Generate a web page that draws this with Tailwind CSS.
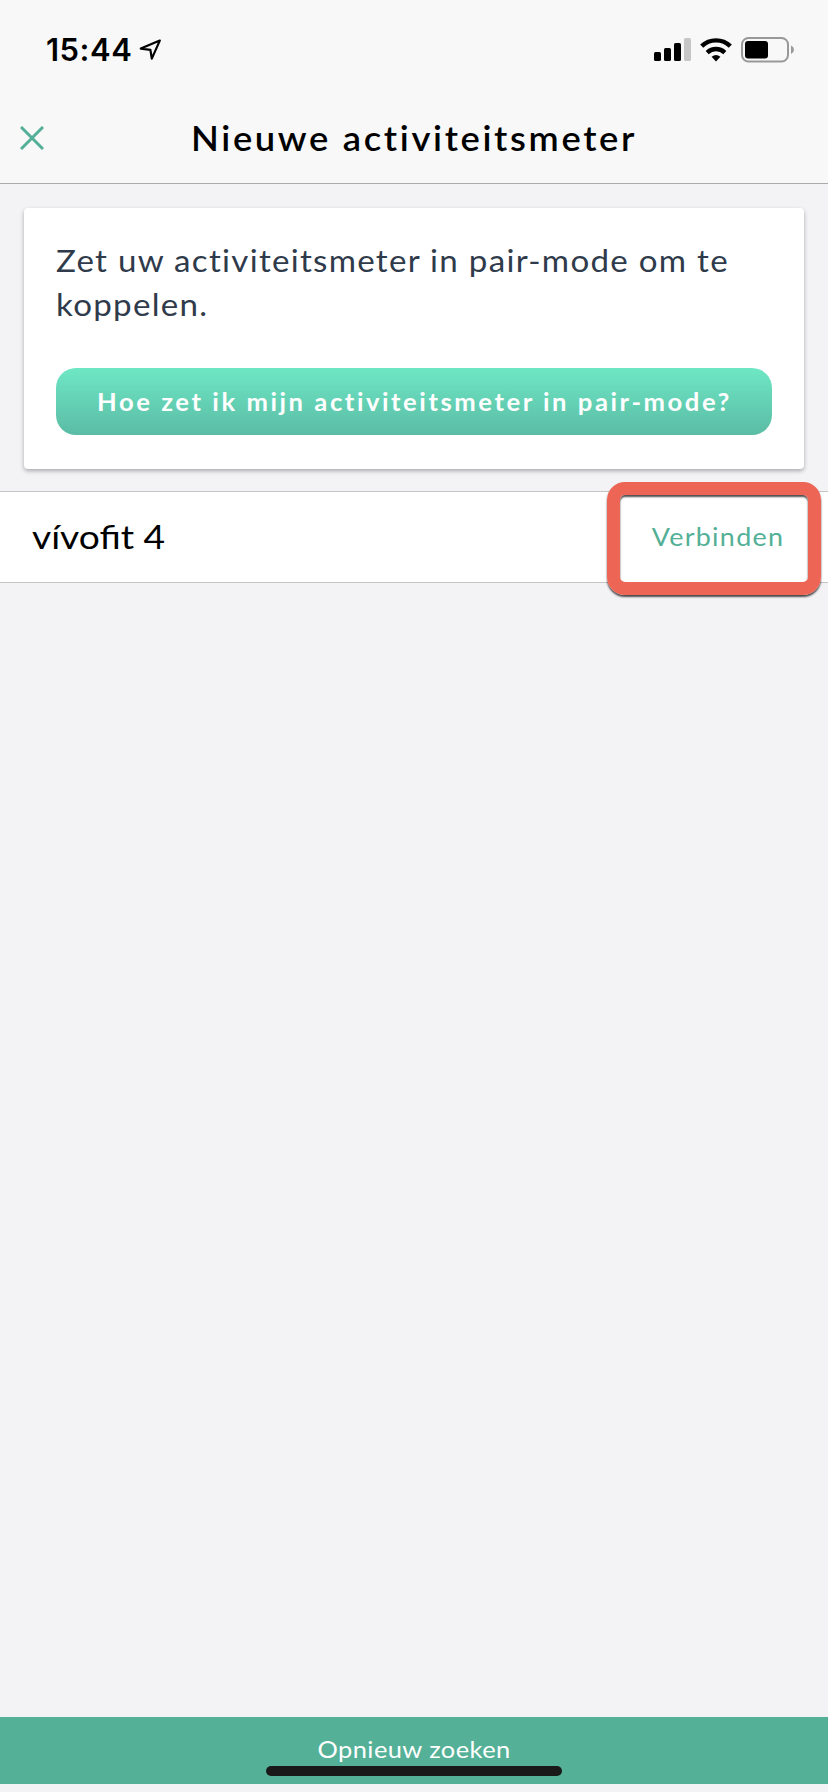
<!DOCTYPE html>
<html lang="nl">
<head>
    <meta charset="utf-8">
    <title>Nieuwe activiteitsmeter</title>
    <script src="https://cdn.jsdelivr.net/npm/@tailwindcss/browser@4"></script>
</head>
<body class="bg-[#f3f3f6] font-['Lato',sans-serif]">
    <div class="flex flex-col w-[828px] h-[1792px] overflow-hidden">

        <!-- Header -->
        <header class="h-[184px] shrink-0 bg-[#f8f8f8] border-b border-[#a9aaaa]">
            <div class="flex items-center justify-between h-[99px] pl-[46px] pr-[33px]">
                <div class="flex items-center gap-[7px]">
                    <span class="font-['Inter',sans-serif] font-semibold text-[31px] leading-none tracking-[0.5px] text-black">15:44</span>
                    <svg class="w-[23px] h-[22px]" viewBox="0 0 23 22" fill="none" stroke="#000" stroke-width="2.2" stroke-linejoin="round">
                        <path d="M20.8 1.6 L1.8 9.6 L11.4 10.8 L12.8 19.6 Z"/>
                    </svg>
                </div>
                <div class="flex items-center">
                    <!-- Signal -->
                    <svg class="w-[37px] h-[24px]" viewBox="0 0 37 24">
                        <rect x="0" y="14" width="7" height="9" rx="1.6"/>
                        <rect x="10" y="10" width="7" height="13" rx="1.6"/>
                        <rect x="20" y="5" width="7" height="18" rx="1.6"/>
                        <rect x="30" y="0" width="7" height="23" rx="1.6" fill="#c6c6c6"/>
                    </svg>
                    <!-- Wifi -->
                    <svg class="w-[32px] h-[24px] ml-[9px]" viewBox="0 0 32 24" fill="none" stroke="#000" stroke-width="4.4">
                        <path d="M1.7 8.2 A20.5 20.5 0 0 1 30.3 8.2"/>
                        <path d="M7.2 14.6 A12.7 12.7 0 0 1 24.8 14.6"/>
                        <path d="M11.6 18.8 A7 7 0 0 1 20.4 18.8 L16 23.4 Z" fill="#000" stroke="none"/>
                    </svg>
                    <!-- Battery -->
                    <svg class="w-[54px] h-[26px] ml-[9px]" viewBox="0 0 54 26">
                        <rect x="1" y="1" width="46" height="23.5" rx="6.5" fill="none" stroke="#999" stroke-width="2"/>
                        <rect x="4" y="4" width="23" height="17.5" rx="3"/>
                        <path d="M50 8.5 Q53 10 53 12.8 Q53 15.6 50 17 Z" fill="#999"/>
                    </svg>
                </div>
            </div>
            <div class="grid grid-cols-[60px_1fr_60px] items-center h-[78px]">
                <svg class="w-[24px] h-[24px] ml-[20px]" viewBox="0 0 24 24" stroke="#53b096" stroke-width="3">
                    <path d="M1 1 L23 23 M23 1 L1 23"/>
                </svg>
                <h1 class="text-center font-semibold text-[34px] leading-none tracking-[2.5px] text-black whitespace-nowrap scale-x-[1.068]">Nieuwe activiteitsmeter</h1>
            </div>
        </header>

        <!-- Pairing card -->
        <section class="mx-[24px] mt-[24px] h-[261px] shrink-0 bg-white rounded-[4px] px-[32px] pt-[30px] shadow-[0_2px_4px_rgba(0,0,0,0.3)]">
            <p class="origin-left scale-x-[1.068] text-[31px] leading-[44px] tracking-[1.2px] text-[#2f3b4b] whitespace-nowrap">Zet uw activiteitsmeter in pair-mode om te<br>koppelen.</p>
            <button class="flex items-center justify-center w-full h-[67px] mt-[42px] pt-px rounded-[20px] bg-linear-to-b from-[#6ee7c4] to-[#5bbca5] font-bold text-[24px] leading-none tracking-[2.4px] text-white whitespace-nowrap">
                <span class="scale-x-[1.067]">Hoe zet ik mijn activiteitsmeter in pair-mode?</span>
            </button>
        </section>

        <!-- Device -->
        <div class="relative flex items-center justify-between h-[92px] mt-[22px] shrink-0 bg-white border-y border-[#c5c5c8] pl-[32px] pr-[44px] pb-[2px]">
            <span class="origin-left scale-x-[1.127] text-[33px] leading-none text-black">vívofit 4</span>
            <button class="origin-right scale-x-[1.075] text-[25px] leading-none tracking-[1.2px] text-[#53b096]">Verbinden</button>
            <div class="absolute left-[607px] -top-[10px] w-[214px] h-[113px] rounded-[18px] border-[13px] border-[#ed6555] shadow-[0_2px_2px_rgba(0,0,0,0.7),inset_0_2px_2px_rgba(0,0,0,0.7)]"></div>
        </div>

        <!-- Footer -->
        <footer class="relative flex justify-center h-[67px] mt-auto mb-[8px] shrink-0 bg-[#54b096] pt-[19px]">
            <button class="h-[26px] scale-x-[1.06] text-[24px] leading-none tracking-[0.4px] text-white">Opnieuw zoeken</button>
            <div class="absolute left-[266px] top-[49px] w-[296px] h-[10px] rounded-full bg-[#191919]"></div>
        </footer>
    </div>
</body>
</html>
